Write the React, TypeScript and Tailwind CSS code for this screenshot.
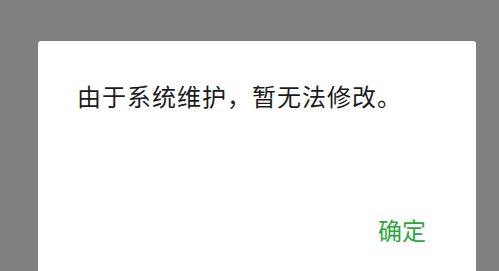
export default function App() {
  return (
    <div
      className="w-[499px] h-[271px] bg-[#808080] overflow-hidden pt-[41px] pl-[38px]"
      style={{ fontFamily: '"Noto Sans CJK SC", "Noto Sans", sans-serif' }}
    >
      <div className="w-[438px] h-[260px] bg-white rounded-[3px] flex flex-col">
        <p className="pl-[39px] pt-[39px] text-[24px] leading-[32px] tracking-[1px] text-[#1c1c1c]">
          由于系统维护，暂无法修改。
        </p>
        <div className="mt-[102px] flex justify-end pr-[50px]">
          <button className="text-[24px] leading-[32px] text-[#2ea838]">确定</button>
        </div>
      </div>
    </div>
  );
}
